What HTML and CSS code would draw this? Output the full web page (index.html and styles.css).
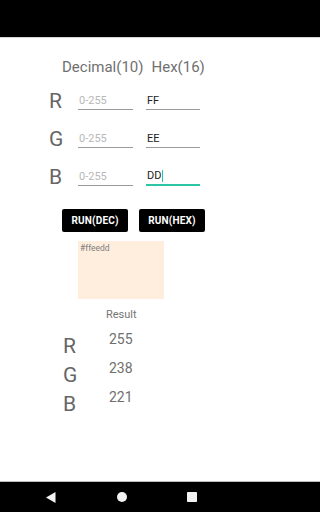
FILE: index.html
```html
<!DOCTYPE html>
<html>
<head>
<meta charset="utf-8">
<link rel="stylesheet" href="styles.css">
</head>
<body>
<div class="status"></div>
<main class="main">
  <div class="header"><span class="h-dec">Decimal(10)</span><span class="h-hex">Hex(16)</span></div>
  <div class="rows">
    <div class="row">
      <span class="label">R</span>
      <div class="field"><span class="ph">0-255</span></div>
      <div class="field hex"><span class="val">FF</span></div>
    </div>
    <div class="row">
      <span class="label">G</span>
      <div class="field"><span class="ph">0-255</span></div>
      <div class="field hex"><span class="val">EE</span></div>
    </div>
    <div class="row">
      <span class="label">B</span>
      <div class="field"><span class="ph">0-255</span></div>
      <div class="field hex focus"><span class="val">DD</span><span class="cursor"></span></div>
    </div>
  </div>
  <div class="buttons">
    <button class="btn">RUN(DEC)</button>
    <button class="btn">RUN(HEX)</button>
  </div>
  <div class="swatch"><span class="swatch-text">#ffeedd</span></div>
  <div class="result-title">Result</div>
  <div class="results">
    <span class="r-label">R</span><span class="r-val">255</span>
    <span class="r-label">G</span><span class="r-val">238</span>
    <span class="r-label">B</span><span class="r-val">221</span>
  </div>
</main>
<nav class="nav">
  <svg class="nav-back" width="10" height="11" viewBox="0 0 10 11"><polygon points="9.5,0 9.5,11 0,5.5" fill="#f2f2f2"/></svg>
  <svg class="nav-home" width="10" height="10" viewBox="0 0 10 10"><circle cx="5" cy="5" r="5" fill="#f2f2f2"/></svg>
  <svg class="nav-recent" width="10" height="10" viewBox="0 0 10 10"><rect x="0" y="0" width="10" height="10" rx="0.8" fill="#f2f2f2"/></svg>
</nav>
</body>
</html>
```
FILE: styles.css
```css
html, body {
  margin: 0;
  padding: 0;
}
body {
  height: 512px;
  display: flex;
  flex-direction: column;
  background: #ffffff;
  font-family: Roboto, "Liberation Sans", sans-serif;
  overflow: hidden;
}
.status {
  height: 37px;
  background: #000;
  border-bottom: 1px solid #d4d4d4;
  flex: none;
}
.main {
  flex: 1;
  display: flex;
  flex-direction: column;
}
.header {
  margin-top: 24px;
  padding-left: 62px;
  font-size: 15px;
  line-height: 10px;
  color: #707070;
  display: flex;
  gap: 8px;
}
.rows {
  display: flex;
  flex-direction: column;
}
.row {
  height: 38px;
  display: flex;
  align-items: flex-end;
  padding-left: 49px;
}
.label {
  width: 29px;
  font-size: 21px;
  line-height: 17px;
  color: #666;
}
.field {
  width: 55px;
  height: 18px;
  border-bottom: 1px solid #9a9a9a;
  font-size: 11px;
  line-height: 18px;
  display: flex;
  align-items: center;
  padding-left: 1px;
  box-sizing: border-box;
}
.field.hex {
  margin-left: 13px;
  width: 54px;
}
.field.focus {
  border-bottom: 2px solid #2cc5a5;
  height: 19px;
}
.ph {
  color: #b8b8b8;
}
.val {
  color: #222;
}
.cursor {
  display: inline-block;
  width: 1px;
  height: 12px;
  background: #2cc5a5;
  margin-left: 1px;
}
.buttons {
  margin-top: 23px;
  padding-left: 62px;
  display: flex;
  gap: 11px;
}
.btn {
  width: 66px;
  height: 23px;
  border: none;
  border-radius: 2px;
  background: #000;
  color: #fff;
  font-family: Roboto, "Liberation Sans", sans-serif;
  font-weight: bold;
  font-size: 10px;
  letter-spacing: 0.2px;
  padding: 0;
}
.swatch {
  margin-top: 9px;
  margin-left: 78px;
  width: 86px;
  height: 58px;
  background: #ffeedd;
  padding: 2px 2px;
  box-sizing: border-box;
}
.swatch-text {
  font-size: 8.5px;
  line-height: 10px;
  color: #7d7d7d;
  display: block;
}
.result-title {
  margin-top: 9px;
  padding-left: 106px;
  font-size: 11px;
  line-height: 13px;
  color: #757575;
}
.results {
  margin-top: 11px;
  padding-left: 63px;
  display: grid;
  grid-template-columns: 46px auto;
  grid-auto-rows: 29px;
}
.r-label {
  font-size: 21px;
  line-height: 29px;
  color: #666;
}
.r-val {
  font-size: 14px;
  line-height: 15px;
  color: #6f6f6f;
}
.nav {
  flex: none;
  height: 30px;
  background: #000;
  border-top: 1px solid #bdbdbd;
  display: flex;
  align-items: center;
  padding-left: 46px;
}
.nav-back {
  margin-top: 1px;
}
.nav-home {
  margin-left: 61px;
}
.nav-recent {
  margin-left: 60px;
}
```
